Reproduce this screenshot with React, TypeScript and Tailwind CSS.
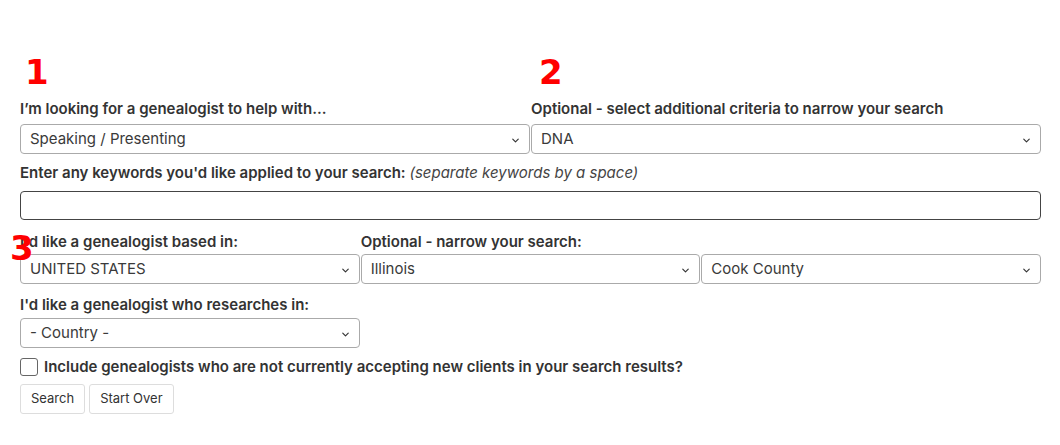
import { ChevronDown } from "lucide-react"

const font = { fontFamily: "Inter, 'Noto Sans', sans-serif" }
const numFont = { fontFamily: "'DejaVu Sans', 'Liberation Sans', sans-serif" }

function Select({ value, className = "" }: { value: string; className?: string }) {
  return (
    <div
      className={`relative h-[30px] flex items-center rounded-[4px] border border-[#aaaaaa] bg-white pl-[9px] text-[15px] text-[#3a3a3a] ${className}`}
    >
      <span>{value}</span>
      <ChevronDown className="absolute right-[8px] top-[10px] w-[11px] h-[11px] text-[#333]" strokeWidth={2.5} />
    </div>
  )
}

function Label({ children }: { children: React.ReactNode }) {
  return <p className="text-[15px] font-semibold text-[#333] leading-[20px]">{children}</p>
}

export default function App() {
  return (
    <div className="w-[1060px] h-[445px] bg-white" style={font}>
      <div className="w-[1021px] ml-5 pt-[53px]">
        <div className="grid grid-cols-2 gap-px">
          <div>
            <div className="pl-[5px] text-[34px] leading-[38px] font-bold text-[#ff0000]" style={numFont}>
              1
            </div>
            <div className="mt-[8px]">
              <Label>I’m looking for a genealogist to help with...</Label>
            </div>
            <Select value="Speaking / Presenting" className="mt-[5px]" />
          </div>
          <div>
            <div className="pl-[8px] text-[34px] leading-[38px] font-bold text-[#ff0000]" style={numFont}>
              2
            </div>
            <div className="mt-[8px]">
              <Label>Optional - select additional criteria to narrow your search</Label>
            </div>
            <Select value="DNA" className="mt-[5px]" />
          </div>
        </div>

        <div className="mt-[9px]">
          <Label>
            Enter any keywords you'd like applied to your search:{" "}
            <span className="italic font-normal text-[#444]">(separate keywords by a space)</span>
          </Label>
          <div className="mt-[8px] h-[29px] rounded-[4px] border-[1.5px] border-[#444] bg-white" />
        </div>

        <div className="relative mt-[12px]">
          <div
            className="absolute z-10 -left-[10px] -top-[3px] text-[34px] leading-[38px] font-bold text-[#ff0000]"
            style={numFont}
          >
            3
          </div>
          <div className="grid grid-cols-3 gap-px">
            <div>
              <Label>I'd like a genealogist based in:</Label>
            </div>
            <div className="col-span-2">
              <Label>Optional - narrow your search:</Label>
            </div>
          </div>
          <div className="grid grid-cols-3 gap-px mt-[2px]">
            <Select value="UNITED STATES" />
            <Select value="Illinois" />
            <Select value="Cook County" />
          </div>
        </div>

        <div className="mt-[11px]">
          <Label>I'd like a genealogist who researches in:</Label>
          <div className="grid grid-cols-3 gap-px mt-[3px]">
            <Select value="- Country -" />
          </div>
        </div>

        <div className="flex items-center gap-[6px] mt-[9px]">
          <div className="w-[18px] h-[18px] rounded-[3px] border border-[#666] bg-white" />
          <Label>Include genealogists who are not currently accepting new clients in your search results?</Label>
        </div>

        <div className="flex gap-[4px] mt-[7px]">
          <button className="h-[30px] px-[10px] rounded-[3px] border border-[#dddddd] bg-white text-[13px] text-[#333]">
            Search
          </button>
          <button className="h-[30px] px-[10px] rounded-[3px] border border-[#dddddd] bg-white text-[13px] text-[#333]">
            Start Over
          </button>
        </div>
      </div>
    </div>
  )
}
